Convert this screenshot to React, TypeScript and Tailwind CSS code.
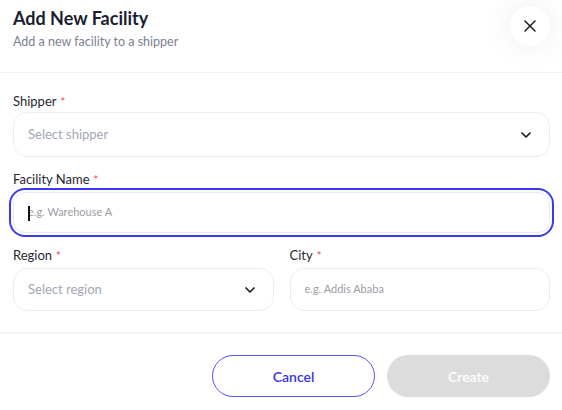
import React from 'react';
import { ChevronDown, X } from 'lucide-react';

const font = { fontFamily: 'Lato, "Noto Sans", sans-serif' };

const Label: React.FC<{ text: string }> = ({ text }) => (
  <div className="flex items-center h-[16px] text-[13px] leading-[16px] text-[#26282f]">
    {text}
    <span className="ml-[4px] text-[11px] text-[#f23b46] leading-none">*</span>
  </div>
);

const SelectBox: React.FC<{ placeholder: string; h: string }> = ({ placeholder, h }) => (
  <div className={`flex items-center justify-between rounded-[14px] border border-[#eeeef1] bg-white pl-[14px] pr-[15px] ${h}`}>
    <span className="text-[13px] text-[#a3a7b6]">{placeholder}</span>
    <ChevronDown size={16} strokeWidth={2.6} className="text-[#1d1d22]" />
  </div>
);

export default function App() {
  return (
    <div style={font} className="w-[562px] h-[410px] overflow-hidden bg-white">
      <div className="flex justify-between h-[73px] border-b border-[#f0f0f2] pl-[13px] pr-[12px]">
        <div className="pt-[6px]">
          <h2 className="text-[18px] leading-[24px] font-bold text-[#1b1e30]">Add New Facility</h2>
          <p className="mt-[4px] text-[12.5px] leading-[16px] text-[#7b8093]">Add a new facility to a shipper</p>
        </div>
        <div className="mt-[6px] flex h-[40px] w-[40px] items-center justify-center rounded-full bg-white shadow-[0_0_32px_rgba(0,0,0,0.08)]">
          <X size={20} strokeWidth={1.8} className="text-[#1a1a1a]" />
        </div>
      </div>

      <div className="pl-[13px] pr-[12px] pt-[20px]">
        <Label text="Shipper" />
        <div className="mt-[3px]">
          <SelectBox placeholder="Select shipper" h="h-[45px]" />
        </div>

        <div className="mt-[14px]">
          <Label text="Facility Name" />
        </div>
        <div className="relative mt-[5px] flex h-[41px] items-center rounded-[12px] border border-[#e8e8ff] bg-white pl-[14px] outline-2 outline-offset-2 outline-[#3a3af0]">
          <span className="absolute left-[14px] top-[13px] h-[15px] w-[2px] bg-[#111]" />
          <input
            className="w-full bg-transparent text-[11px] text-[#333] placeholder:text-[#9c9ca3] outline-none"
            placeholder="e.g. Warehouse A"
          />
        </div>

        <div className="mt-[14px] grid grid-cols-2 gap-[16px]">
          <div>
            <Label text="Region" />
            <div className="mt-[5px]">
              <SelectBox placeholder="Select region" h="h-[43px]" />
            </div>
          </div>
          <div>
            <Label text="City" />
            <div className="mt-[5px] flex h-[43px] items-center rounded-[14px] border border-[#eeeef1] bg-white pl-[14px]">
              <input
                className="w-full bg-transparent text-[11px] text-[#333] placeholder:text-[#9c9ca3] outline-none"
                placeholder="e.g. Addis Ababa"
              />
            </div>
          </div>
        </div>
      </div>

      <div className="mt-[21px] border-t-2 border-[#f3f3f4]" />

      <div className="mt-[21px] flex justify-end gap-[12px] pr-[12px]">
        <button className="h-[42px] w-[163px] rounded-full border border-[#5252f5] text-[14px] font-semibold text-[#3434e6]">
          Cancel
        </button>
        <button className="h-[42px] w-[163px] rounded-full bg-[#dcdcdc] text-[14px] font-semibold text-white">
          Create
        </button>
      </div>
    </div>
  );
}
